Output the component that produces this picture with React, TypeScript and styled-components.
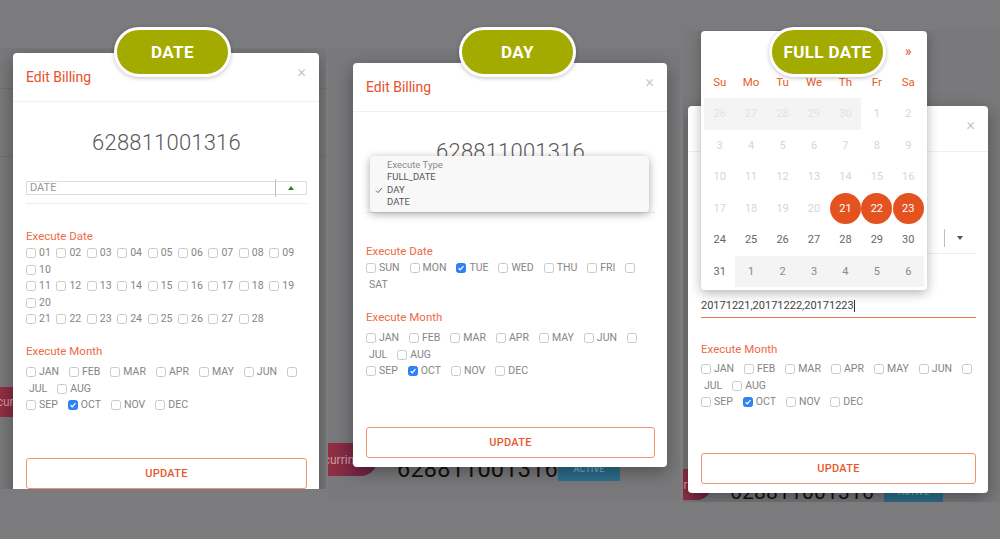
import React from 'react';
import styled, { createGlobalStyle } from 'styled-components';

const GlobalStyle = createGlobalStyle`
  html, body {
    margin: 0;
    padding: 0;
  }
  body {
    background: #7b7b7d;
    font-family: Roboto, "Liberation Sans", sans-serif;
    -webkit-font-smoothing: antialiased;
  }
`;

const Stage = styled.div`
  width: 1000px;
  height: 539px;
  overflow: hidden;
  display: flex;
  align-items: flex-start;
`;

const Column = styled.div<{ $w: number; $ml?: number }>`
  position: relative;
  flex: 0 0 ${p => p.$w}px;
  margin-left: ${p => p.$ml ?? 0}px;
`;

const Badge = styled.div<{ $x: number }>`
  position: absolute;
  top: 27px;
  left: ${p => p.$x}px;
  z-index: 5;
  width: 117px;
  height: 50px;
  box-sizing: border-box;
  border: 3px solid #fff;
  border-radius: 25px;
  background: #a4ab00;
  box-shadow: 0 1px 4px rgba(0, 0, 0, 0.25);
  display: flex;
  align-items: center;
  justify-content: center;
  color: #fff;
  font-size: 17px;
  font-weight: 700;
  letter-spacing: 0.4px;
`;

/* one dimmed screenshot of the billing page */
const Shot = styled.div<{ $top: number; $h: number }>`
  position: relative;
  margin-top: ${p => p.$top}px;
  height: ${p => p.$h}px;
  overflow: hidden;
  background: #79797b;
`;

const Page = styled.div<{ $pt: number }>`
  display: flex;
  flex-direction: column;
  padding-top: ${p => p.$pt}px;
`;

const Rule = styled.div<{ $h: number }>`
  height: ${p => p.$h}px;
  border-top: 1px solid rgba(0, 0, 0, 0.07);
`;

const DataRow = styled.div<{ $h: number }>`
  display: flex;
  align-items: center;
  height: ${p => p.$h}px;
`;

const RecurTag = styled.div<{ $w: number; $h: number; $pr: number }>`
  align-self: flex-start;
  flex: 0 0 ${p => p.$w}px;
  height: ${p => p.$h}px;
  box-sizing: border-box;
  padding-right: ${p => p.$pr}px;
  border-radius: 0 16px 16px 0;
  background: linear-gradient(90deg, #923040, #6c1f4c);
  display: flex;
  align-items: center;
  justify-content: flex-end;
  overflow: hidden;
  white-space: nowrap;
  color: #c99aa6;
  font-size: 12px;
`;

const BigNumber = styled.div<{ $size: number; $ml: number }>`
  margin-left: ${p => p.$ml}px;
  font-size: ${p => p.$size}px;
  color: #111;
  letter-spacing: 0.2px;
`;

const ActiveTag = styled.div<{ $w: number; $h: number; $ml: number }>`
  margin-left: ${p => p.$ml}px;
  width: ${p => p.$w}px;
  height: ${p => p.$h}px;
  background: #2d6f8d;
  color: #6fa6bf;
  font-size: 9px;
  font-weight: 700;
  display: flex;
  align-items: center;
  justify-content: center;
`;

/* modal */
const Modal = styled.div<{ $x: number; $y: number; $w: number }>`
  position: absolute;
  left: ${p => p.$x}px;
  top: ${p => p.$y}px;
  width: ${p => p.$w}px;
  background: #fff;
  border-radius: 4px;
  box-shadow: 0 5px 18px rgba(0, 0, 0, 0.35);
  padding-bottom: 9px;
`;

const ModalHead = styled.div<{ $h: number }>`
  height: ${p => p.$h}px;
  box-sizing: border-box;
  display: flex;
  align-items: center;
  justify-content: space-between;
  padding: 0 13px;
  border-bottom: 1px solid #f1f1f1;
`;

const Title = styled.div`
  font-size: 14px;
  color: #e8512a;
`;

const Close = styled.div`
  align-self: flex-start;
  margin-top: 11px;
  font-size: 16px;
  line-height: 16px;
  color: #bdbdbd;
  font-weight: 300;
`;

const Body = styled.div`
  position: relative;
  padding: 0 12px 0 13px;
`;

const Msisdn = styled.div<{ $mt: number }>`
  margin-top: ${p => p.$mt}px;
  text-align: center;
  font-size: 22px;
  line-height: 26px;
  font-weight: 300;
  color: #5a5a5a;
  letter-spacing: 0.2px;
`;

const SelectRow = styled.div<{ $mt: number }>`
  margin-top: ${p => p.$mt}px;
  display: flex;
  align-items: center;
  height: 18px;
  padding-bottom: 6px;
  border-bottom: 1px solid #ececec;
`;

const SelectField = styled.div<{ $boxed?: boolean }>`
  flex: 1;
  height: 14px;
  box-sizing: border-box;
  border: 1px solid ${p => (p.$boxed ? '#dcdcdc' : 'transparent')};
  border-right: none;
  padding-left: 3px;
  font-size: 11px;
  line-height: 12px;
  color: #9a9a9a;
`;

const SelectDivider = styled.div`
  width: 1px;
  height: 18px;
  background: #bdbdbd;
`;

const SelectArrow = styled.div<{ $boxed?: boolean }>`
  width: 31px;
  height: 14px;
  box-sizing: border-box;
  border: 1px solid ${p => (p.$boxed ? '#dcdcdc' : 'transparent')};
  border-left: none;
  display: flex;
  align-items: center;
  justify-content: center;
`;

const Caret = styled.span<{ $up?: boolean }>`
  width: 0;
  height: 0;
  border-left: 3.5px solid transparent;
  border-right: 3.5px solid transparent;
  ${p =>
    p.$up
      ? 'border-bottom: 4px solid #178a17;'
      : 'border-top: 4px solid #555;'}
`;

const SectionLabel = styled.div<{ $mt: number }>`
  margin-top: ${p => p.$mt}px;
  font-size: 11.5px;
  line-height: 16px;
  color: #ee6a45;
`;

const CheckBlock = styled.div<{ $mt: number }>`
  margin-top: ${p => p.$mt}px;
`;

const CheckLine = styled.div`
  display: flex;
  flex-wrap: wrap;
  align-items: center;
`;

const Box = styled.span<{ $on?: boolean }>`
  width: 10px;
  height: 10px;
  box-sizing: border-box;
  border-radius: 2.5px;
  border: 1px solid ${p => (p.$on ? '#2a7ef7' : '#c9c9c9')};
  background: ${p => (p.$on ? '#2f82f8' : '#fff')};
  display: flex;
  align-items: center;
  justify-content: center;
`;

const OptText = styled.span<{ $gap: number }>`
  margin: 0 ${p => p.$gap}px 0 3px;
  font-size: 10.5px;
  line-height: 16.5px;
  color: #858585;
`;

const DateInput = styled.div`
  padding: 6px 0 3px;
  font-size: 11px;
  line-height: 16px;
  color: #444;
  border-bottom: 1px solid #f07650;
  display: flex;
  align-items: center;
`;

const TextCursor = styled.span`
  width: 1px;
  height: 12px;
  background: #333;
`;

const UpdateButton = styled.div<{ $mt: number }>`
  margin-top: ${p => p.$mt}px;
  height: 31px;
  box-sizing: border-box;
  border: 1px solid #f4916e;
  border-radius: 3px;
  display: flex;
  align-items: center;
  justify-content: center;
  color: #e8582c;
  font-size: 11px;
  font-weight: 500;
  letter-spacing: 0.3px;
`;

/* native select menu opened in the DAY shot */
const SelectMenu = styled.div`
  position: absolute;
  left: 17px;
  top: 93px;
  width: 279px;
  height: 56px;
  box-sizing: border-box;
  padding-top: 3px;
  background: #f8f8f8;
  border-radius: 4px;
  box-shadow: 0 2px 9px rgba(0, 0, 0, 0.35);
`;

const MenuItem = styled.div<{ $muted?: boolean }>`
  position: relative;
  padding-left: 17px;
  font-size: 9.5px;
  line-height: 12.3px;
  color: ${p => (p.$muted ? '#8a8a8a' : '#555')};
`;

const MenuTick = styled.svg`
  position: absolute;
  left: 5px;
  top: 3px;
`;

/* date picker in the FULL DATE shot */
const Calendar = styled.div`
  position: absolute;
  left: 18px;
  top: 1px;
  z-index: 3;
  width: 226px;
  box-sizing: border-box;
  padding: 3px;
  background: #fff;
  border-radius: 4px;
  box-shadow: 0 3px 12px rgba(0, 0, 0, 0.3);
`;

const CalGrid = styled.div<{ $row: number }>`
  display: grid;
  grid-template-columns: repeat(7, 1fr);
  grid-auto-rows: ${p => p.$row}px;
  align-items: center;
  justify-items: center;
`;

const CalNext = styled.div`
  grid-column: 7;
  font-size: 14px;
  color: #ea5a2c;
`;

const WeekDay = styled.div`
  margin-bottom: 2px;
  font-size: 11.5px;
  color: #ea5a2c;
`;

type DayKind = 'prev' | 'off' | 'on' | 'sel' | 'next';

const DAY_COLORS: Record<DayKind, string> = {
  prev: '#e3e3e3',
  off: '#d6d6d6',
  on: '#666',
  sel: '#fff',
  next: '#8a8a8a',
};

const Day = styled.div<{ $kind: DayKind }>`
  justify-self: stretch;
  align-self: stretch;
  display: flex;
  align-items: center;
  justify-content: center;
  font-size: 11px;
  color: ${p => DAY_COLORS[p.$kind]};
  background: ${p => (p.$kind === 'prev' || p.$kind === 'next' ? '#f4f4f4' : 'transparent')};
`;

const DayDot = styled.span`
  width: 31px;
  height: 31px;
  border-radius: 50%;
  background: #e4531f;
  display: flex;
  align-items: center;
  justify-content: center;
`;

const Tick = () => (
  <svg width="8" height="8" viewBox="0 0 8 8">
    <polyline points="1.6,4.2 3.3,5.8 6.4,2.2" fill="none" stroke="#fff" strokeWidth="1.3" />
  </svg>
);

const pad = (n: number) => String(n).padStart(2, '0');
const range = (a: number, b: number) => Array.from({ length: b - a + 1 }, (_, i) => a + i);

const DATE_GROUPS = [range(1, 10), range(11, 20), range(21, 28)].map(g => g.map(pad));
const MONTH_GROUPS = [
  ['JAN', 'FEB', 'MAR', 'APR', 'MAY', 'JUN', 'JUL', 'AUG'],
  ['SEP', 'OCT', 'NOV', 'DEC'],
];
const WEEKDAYS = ['SUN', 'MON', 'TUE', 'WED', 'THU', 'FRI', 'SAT'];

const CAL_ROWS: [number, DayKind][][] = [
  [[26, 'prev'], [27, 'prev'], [28, 'prev'], [29, 'prev'], [30, 'prev'], [1, 'off'], [2, 'off']],
  range(3, 9).map(d => [d, 'off']),
  range(10, 16).map(d => [d, 'off']),
  [[17, 'off'], [18, 'off'], [19, 'off'], [20, 'off'], [21, 'sel'], [22, 'sel'], [23, 'sel']],
  range(24, 30).map(d => [d, 'on']),
  [[31, 'on'], ...range(1, 6).map(d => [d, 'next'] as [number, DayKind])],
];

const CheckList: React.FC<{ items: string[]; checked?: string[]; gap: number }> = ({
  items,
  checked = [],
  gap,
}) => (
  <CheckLine>
    {items.map(it => {
      const on = checked.includes(it);
      return (
        <React.Fragment key={it}>
          <Box $on={on}>{on && <Tick />}</Box>
          <OptText $gap={gap}>{it}</OptText>
        </React.Fragment>
      );
    })}
  </CheckLine>
);

const MonthChecks: React.FC<{ mt: number }> = ({ mt }) => (
  <CheckBlock $mt={mt}>
    {MONTH_GROUPS.map((g, i) => (
      <CheckList key={i} items={g} checked={['OCT']} gap={10} />
    ))}
  </CheckBlock>
);

const Head: React.FC<{ h: number }> = ({ h }) => (
  <ModalHead $h={h}>
    <Title>Edit Billing</Title>
    <Close>×</Close>
  </ModalHead>
);

const Picker = () => (
  <Calendar>
    <CalGrid $row={34}>
      <CalNext>»</CalNext>
    </CalGrid>
    <CalGrid $row={30}>
      {['Su', 'Mo', 'Tu', 'We', 'Th', 'Fr', 'Sa'].map(d => (
        <WeekDay key={d}>{d}</WeekDay>
      ))}
    </CalGrid>
    <CalGrid $row={31.5}>
      {CAL_ROWS.flat().map(([d, kind], i) => (
        <Day key={i} $kind={kind}>
          {kind === 'sel' ? <DayDot>{d}</DayDot> : d}
        </Day>
      ))}
    </CalGrid>
  </Calendar>
);

export default function App() {
  return (
    <>
      <GlobalStyle />
      <Stage>
        <Column $w={326}>
          <Badge $x={114}>DATE</Badge>
          <Shot $top={48} $h={441}>
            <Page $pt={40}>
              <Rule $h={67} />
              <Rule $h={230} />
              <DataRow $h={30}>
                <RecurTag $w={60} $h={30} $pr={26}>Recurring</RecurTag>
              </DataRow>
            </Page>
            <Modal $x={13} $y={5} $w={306}>
              <Head h={49} />
              <Body>
                <Msisdn $mt={28}>628811001316</Msisdn>
                <SelectRow $mt={23}>
                  <SelectField $boxed>DATE</SelectField>
                  <SelectDivider />
                  <SelectArrow $boxed>
                    <Caret $up />
                  </SelectArrow>
                </SelectRow>
                <SectionLabel $mt={24}>Execute Date</SectionLabel>
                <CheckBlock $mt={1}>
                  {DATE_GROUPS.map((g, i) => (
                    <CheckList key={i} items={g} gap={5.6} />
                  ))}
                </CheckBlock>
                <SectionLabel $mt={15.5}>Execute Month</SectionLabel>
                <MonthChecks mt={5} />
                <UpdateButton $mt={44.5}>UPDATE</UpdateButton>
                <CheckBlock $mt={20} />
              </Body>
            </Modal>
          </Shot>
        </Column>

        <Column $w={352} $ml={2}>
          <Badge $x={131}>DAY</Badge>
          <Shot $top={48} $h={452}>
            <Page $pt={395}>
              <DataRow $h={52}>
                <RecurTag $w={49} $h={33} $pr={16}>Recurring</RecurTag>
                <BigNumber $size={23.5} $ml={20}>628811001316</BigNumber>
                <ActiveTag $w={62} $h={23} $ml={0}>ACTIVE</ActiveTag>
              </DataRow>
            </Page>
            <Modal $x={25} $y={15} $w={314}>
              <Head h={49} />
              <Body>
                <Msisdn $mt={27}>628811001316</Msisdn>
                <SelectRow $mt={23}>
                  <SelectField>DAY</SelectField>
                  <SelectDivider />
                  <SelectArrow>
                    <Caret />
                  </SelectArrow>
                </SelectRow>
                <SectionLabel $mt={30}>Execute Date</SectionLabel>
                <CheckBlock $mt={1}>
                  <CheckList items={WEEKDAYS} checked={['TUE']} gap={10} />
                </CheckBlock>
                <SectionLabel $mt={16}>Execute Month</SectionLabel>
                <MonthChecks mt={5} />
                <UpdateButton $mt={47.5}>UPDATE</UpdateButton>
              </Body>
              <SelectMenu>
                <MenuItem $muted>Execute Type</MenuItem>
                <MenuItem>FULL_DATE</MenuItem>
                <MenuItem>
                  <MenuTick width="8" height="7" viewBox="0 0 8 7">
                    <polyline points="1,3.6 3,5.6 7,1" fill="none" stroke="#666" strokeWidth="1" />
                  </MenuTick>
                  DAY
                </MenuItem>
                <MenuItem>DATE</MenuItem>
              </SelectMenu>
            </Modal>
          </Shot>
        </Column>

        <Column $w={317} $ml={3}>
          <Badge $x={86}>FULL DATE</Badge>
          <Shot $top={30} $h={472}>
            <Page $pt={439}>
              <DataRow $h={46}>
                <RecurTag $w={29} $h={31} $pr={4}>Recurring</RecurTag>
                <BigNumber $size={21} $ml={18}>628811001316</BigNumber>
                <ActiveTag $w={59} $h={22} $ml={10}>ACTIVE</ActiveTag>
              </DataRow>
            </Page>
            <Modal $x={5} $y={76} $w={300}>
              <Head h={46} />
              <Body>
                <Msisdn $mt={26}>628811001316</Msisdn>
                <SelectRow $mt={25}>
                  <SelectField>FULL_DATE</SelectField>
                  <SelectDivider />
                  <SelectArrow>
                    <Caret />
                  </SelectArrow>
                </SelectRow>
                <SectionLabel $mt={22}>Execute Date</SectionLabel>
                <DateInput>
                  20171221,20171222,20171223
                  <TextCursor />
                </DateInput>
                <SectionLabel $mt={23}>Execute Month</SectionLabel>
                <MonthChecks mt={4} />
                <UpdateButton $mt={42.5}>UPDATE</UpdateButton>
              </Body>
            </Modal>
            <Picker />
          </Shot>
        </Column>
      </Stage>
    </>
  );
}
